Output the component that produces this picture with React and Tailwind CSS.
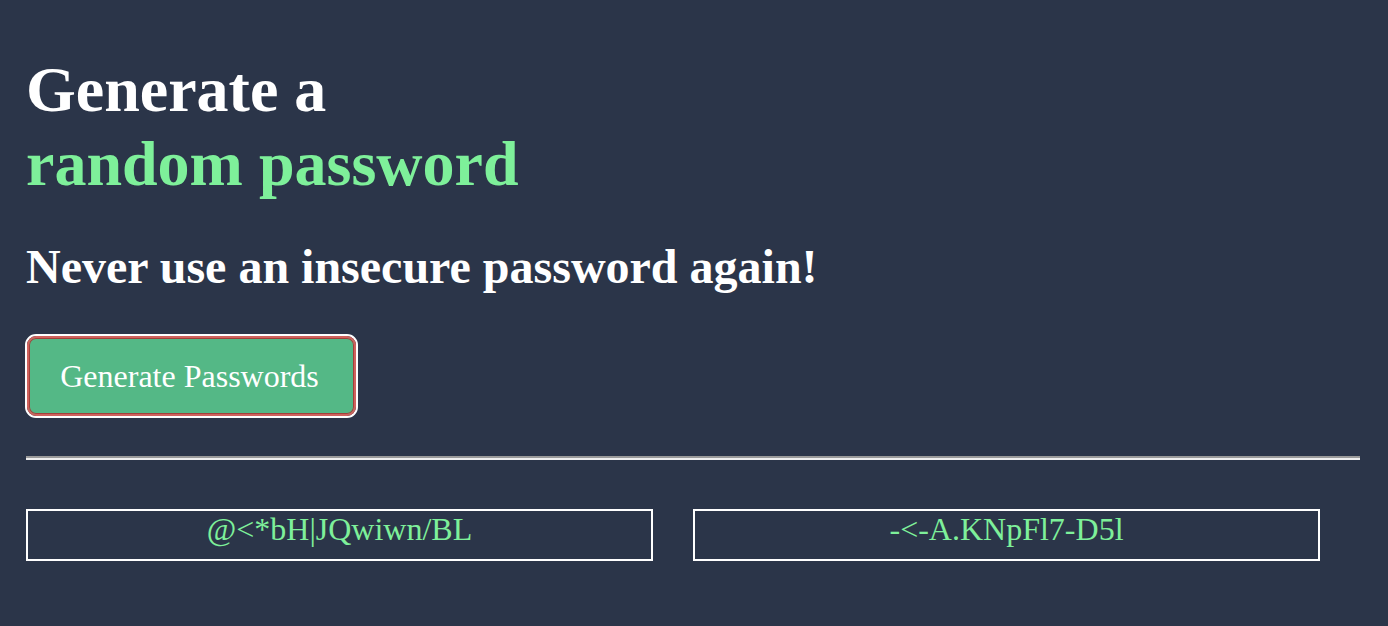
const PASSWORDS = ['@<*bH|JQwiwn/BL', '-<-A.KNpFl7-D5l']

export default function App() {
  return (
    <div
      className="min-h-screen w-full bg-[#2b3549] pl-[26px] pr-[28px] pt-[53px] text-white"
      style={{ fontFamily: '"Liberation Serif", "Times New Roman", serif' }}
    >
      {/* Heading */}
      <h1 className="text-[64px] font-bold leading-[73.5px]">
        Generate a
        <br />
        <span className="text-[#7ef09a]">random password</span>
      </h1>
      <h2 className="mt-[39px] text-[48px] font-bold leading-[55px]">
        Never use an insecure password again!
      </h2>

      {/* Button */}
      <div className="mt-[40px] flex">
        <button className="-ml-px flex h-[84px] w-[333px] items-center justify-center rounded-[11px] border-2 border-white">
          <span className="flex h-full w-full items-center justify-center rounded-[9px] border-2 border-[#cf625d] bg-[#54b886] pr-[4px] text-[32px] leading-[37px] text-white shadow-[inset_0_0_0_1px_#a3403b]">
            Generate Passwords
          </span>
        </button>
      </div>

      <hr className="mt-[38px] border-t-2 border-b-2 border-t-[#9a9a9a] border-b-[#eeeeee]" />

      {/* Results */}
      <div className="mt-[49px] flex gap-[40px]">
        {PASSWORDS.map((p) => (
          <div
            key={p}
            className="h-[52px] w-[627px] border-2 border-white text-center text-[32px] leading-[37px] text-[#7ef09a]"
          >
            {p}
          </div>
        ))}
      </div>
    </div>
  )
}
